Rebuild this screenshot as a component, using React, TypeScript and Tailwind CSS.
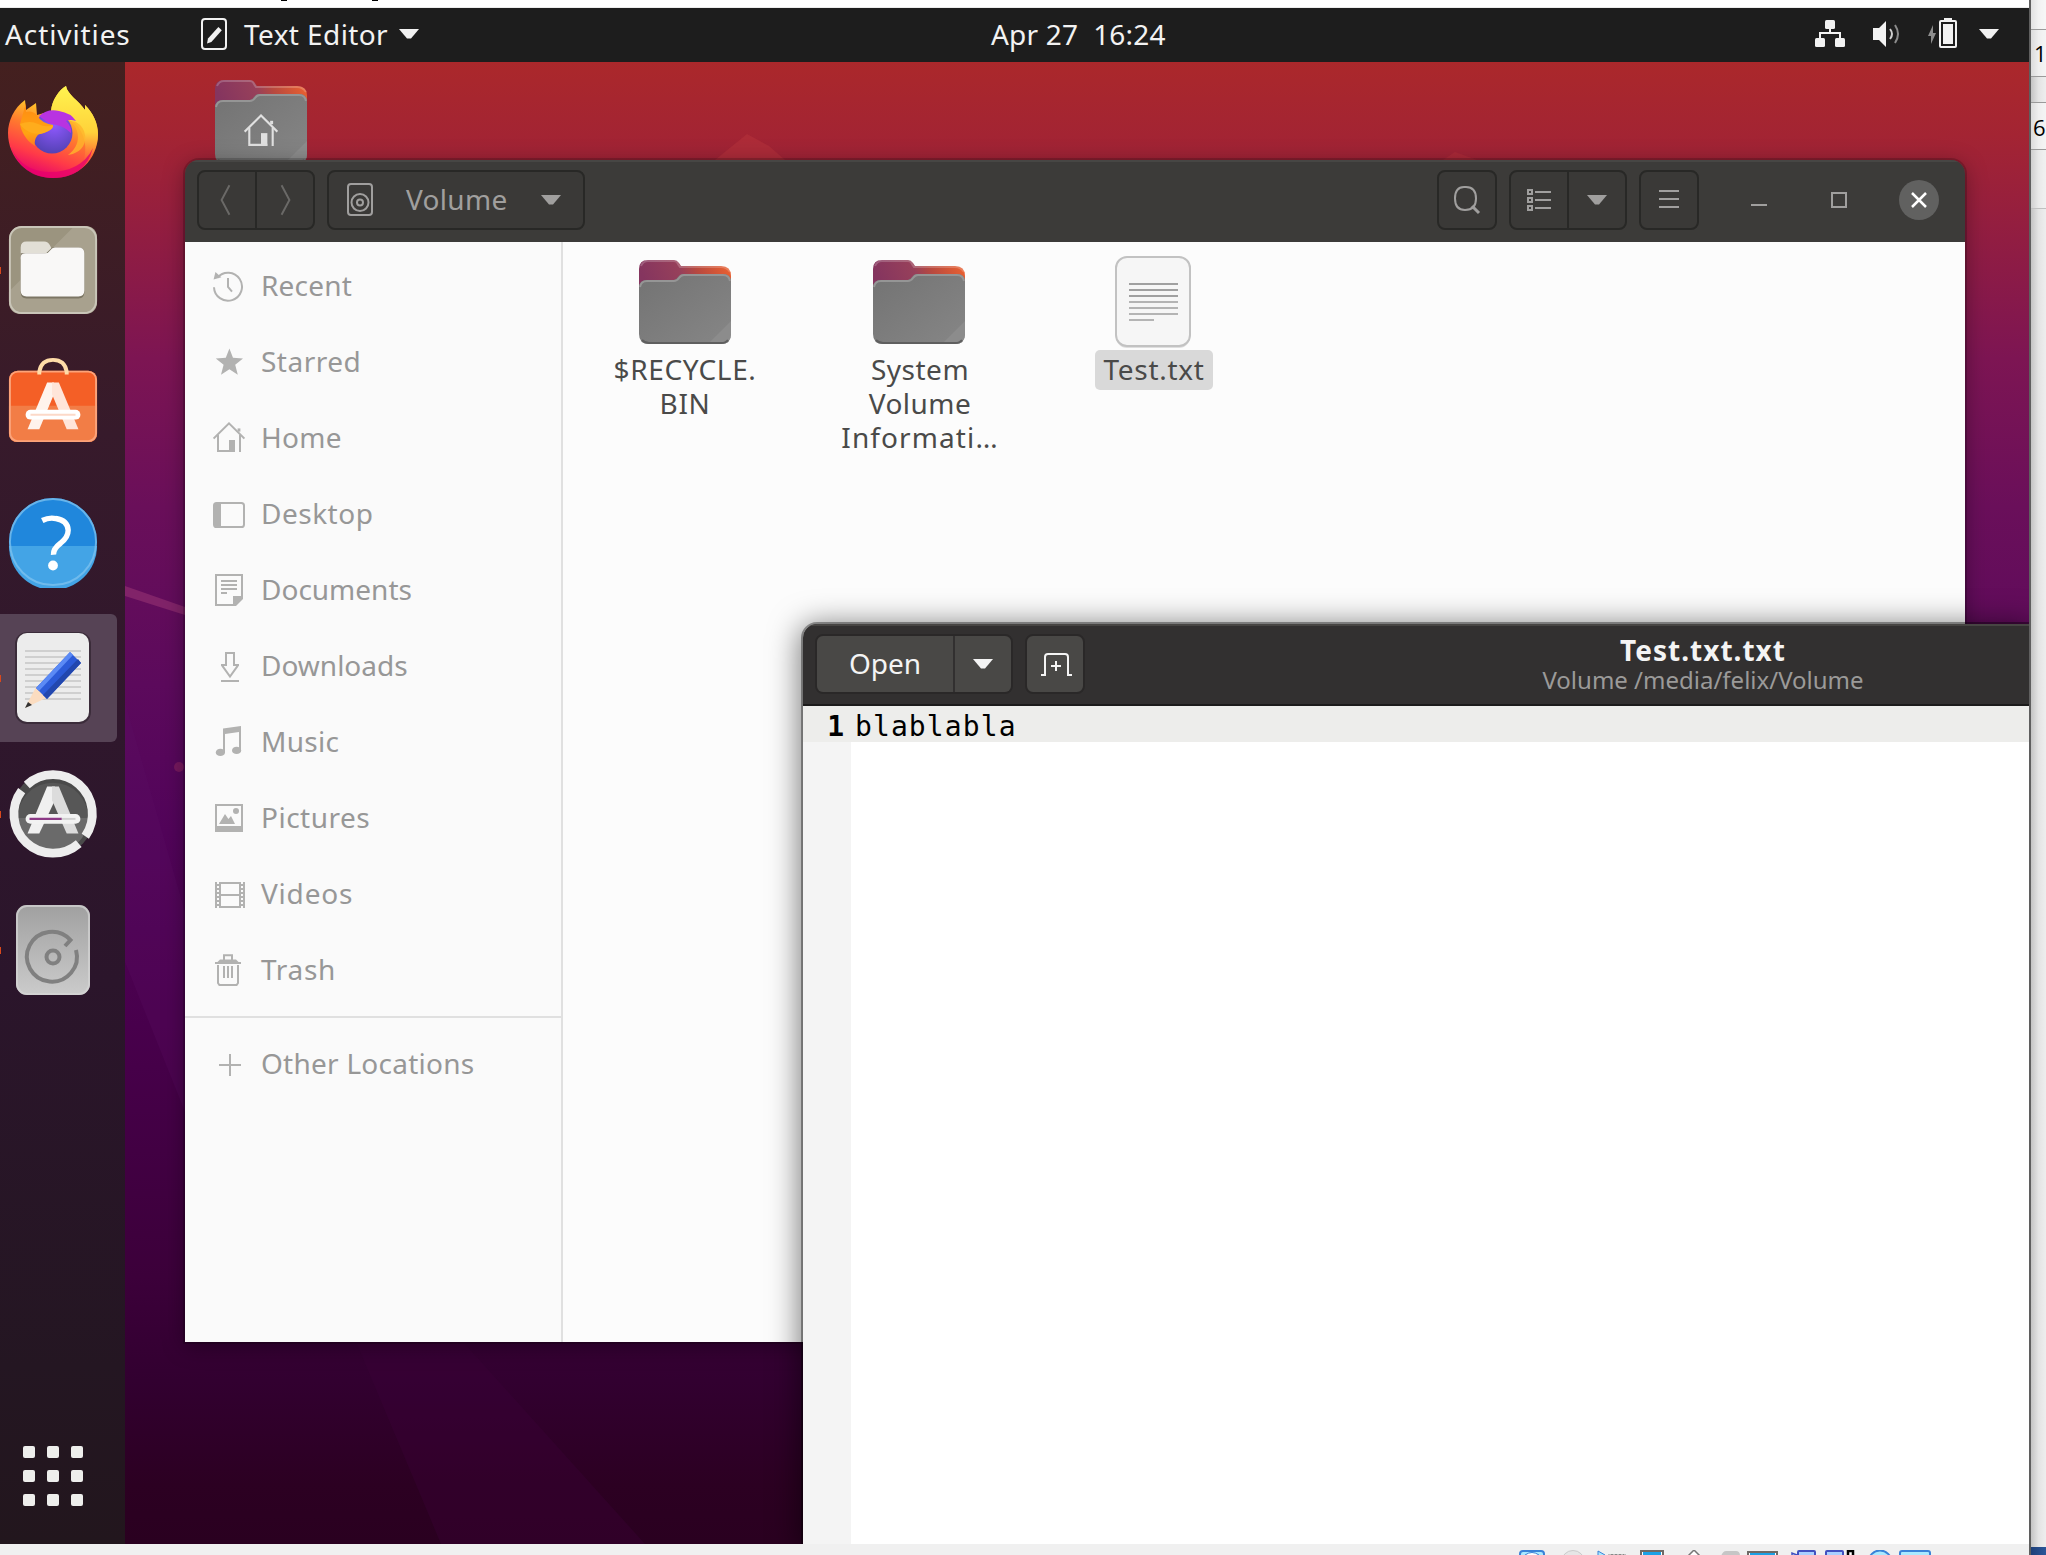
import React from "react";

const G = "#b2b2b1";

function Caret({ color }: { color: string }) {
  return (
    <svg className="h-[10px] w-[20px] shrink-0" viewBox="0 0 20 10">
      <path d="M0 0H20L12 9.5H8Z" fill={color} />
    </svg>
  );
}

function HomeGlyph({ color }: { color: string }) {
  return (
    <g stroke={color} fill="none" strokeWidth="1">
      <path d="M.3 8.3 8 .7l7.7 7.6" />
      <path d="M2.5 6.5v8H11M13.5 6.5V15" />
      <path d="M13 3.2v1.6" strokeWidth="1.4" />
      <rect x="8" y="9" width="3" height="6" fill={color} stroke="none" />
    </g>
  );
}

const places: { name: string; tracking: string; icon: React.ReactNode }[] = [
  {
    name: "Recent",
    tracking: "tracking-[0.2px]",
    icon: (
      <g fill="none" stroke={G}>
        <path d="M2.2 3.8A7 7 0 1 1 .5 8.6" />
        <path d="M7.5 4v4.4l2 2.4" />
        <path d="M.3 4.8 1.2 1l3 2.6Z" fill={G} stroke="none" />
      </g>
    ),
  },
  {
    name: "Starred",
    tracking: "tracking-[0.5px]",
    icon: <path fill={G} d="M8.2 1.2 10 5.9l5 .3-3.9 3.2 1.3 5L8.2 11.6 4 14.4l1.3-5L1.4 6.2l5-.3Z" />,
  },
  { name: "Home", tracking: "tracking-[0.3px]", icon: <HomeGlyph color={G} /> },
  {
    name: "Desktop",
    tracking: "tracking-[0.5px]",
    icon: (
      <g>
        <rect x=".5" y="2.5" width="15" height="12" rx="1.3" fill="none" stroke={G} />
        <path d="M1 2.5H4v12H1Z" fill={G} />
      </g>
    ),
  },
  {
    name: "Documents",
    tracking: "tracking-normal",
    icon: (
      <g fill="none" stroke={G}>
        <path d="M10.5 15.5h-9V.5h13V11.5" />
        <path d="M4 3.5h8M4 5.5h8M4 7.5h8M4 9.5h3" />
        <path d="M10 11h5v1.5L11.5 16H10Z" fill={G} stroke="none" />
      </g>
    ),
  },
  {
    name: "Downloads",
    tracking: "tracking-normal",
    icon: (
      <g fill="none" stroke={G}>
        <path d="M4 7.5H6.5v-6h4v6H13M4.6 7.8l3.9 5.5 3.9-5.5" />
        <path d="M4 15.5h9" />
      </g>
    ),
  },
  {
    name: "Music",
    tracking: "tracking-[0.3px]",
    icon: (
      <g fill={G}>
        <path d="M5 1.2 14 0v12.500h-1V3L6 4v9.500H5Z" />
        <ellipse cx="3.7" cy="13.2" rx="2.3" ry="1.8" />
        <ellipse cx="11.8" cy="12.2" rx="2.3" ry="1.8" />
      </g>
    ),
  },
  {
    name: "Pictures",
    tracking: "tracking-[0.5px]",
    icon: (
      <g>
        <rect x="1.5" y="1.5" width="13" height="13" fill="none" stroke={G} />
        <path d="M1 12h14v3H1ZM3 11l3-5 1.700 2.500L9 7l2 4Z" fill={G} />
        <circle cx="11.5" cy="4.5" r="1.5" fill={G} />
      </g>
    ),
  },
  {
    name: "Videos",
    tracking: "tracking-[0.8px]",
    icon: (
      <g fill="none" stroke={G}>
        <path d="M3.5 2.5h10v12h-10ZM3.5 8.5h10M1.5 2v13M15.5 2v13" />
        <path d="M2.5 3v12M14.5 3v12" strokeDasharray="1 1" />
      </g>
    ),
  },
  {
    name: "Trash",
    tracking: "tracking-[0.7px]",
    icon: (
      <g fill="none" stroke={G}>
        <path d="M1 4.5h13" />
        <path d="M2 4.2 3.5 2.8h8L13 4.2Z" fill={G} stroke="none" />
        <path d="M5.5 3V.6h4V3M2.5 5.5v9l.7 1h8.6l.7-1v-9" />
        <path d="M5.5 6v6M7.5 6v6M9.5 6v6" />
      </g>
    ),
  },
];

function PlaceRow({ name, icon, tracking }: { name: string; icon: React.ReactNode; tracking: string }) {
  return (
    <div className="flex h-[76px] items-center gap-4 pl-7">
      <svg className="h-8 w-8 shrink-0" viewBox="0 0 16 16">
        {icon}
      </svg>
      <span className={"-mt-[3px] " + tracking}>{name}</span>
    </div>
  );
}

function Folder({ id, children }: { id: string; children?: React.ReactNode }) {
  return (
    <svg className="h-[84px] w-[92px]" viewBox="0 0 92 84">
      <defs>
        <linearGradient id={id + "a"} x1="0" y1="0.2" x2="1" y2="0">
          <stop offset="0" stopColor="#85355f" />
          <stop offset=".42" stopColor="#97405a" />
          <stop offset=".6" stopColor="#b8493f" />
          <stop offset="1" stopColor="#f0642f" />
        </linearGradient>
        <linearGradient id={id + "b"} x1="0" y1="0" x2="1" y2="1">
          <stop offset="0" stopColor="#737373" />
          <stop offset="1" stopColor="#868686" />
        </linearGradient>
      </defs>
      <path d="M0 40V9Q0 0 9 0h26q3 0 5 3l2 3h40q10 0 10 10v24Z" fill={"url(#" + id + "a)"} />
      <path d="M2 6Q4 1 9 1h26q3 0 4 3l2 3h41q6 0 9 5" fill="none" stroke="#fff" strokeOpacity=".2" strokeWidth="2" />
      <path d="M0 28q0-8 8-8h27q2 0 4-3t5-3h40q8 0 8 8v52q0 10-10 10H10Q0 84 0 74Z" fill={"url(#" + id + "b)"} />
      <path d="M1 27q1-6 7-6h27q3 0 5-3t5-3h39q6 0 7 6" fill="none" stroke="#959595" strokeWidth="2" />
      <path d="M92 61v13q0 10-10 10H69Z" fill="#8c8c8c" />
      <path d="M3 80q3 3 7 3h72q5 0 7-3" fill="none" stroke="#5f5f5f" strokeWidth="2" />
      {children}
    </svg>
  );
}

function TextFile() {
  return (
    <svg className="h-[94px] w-[78px]" viewBox="0 0 78 94">
      <rect x="2" y="3" width="74" height="90" rx="11" fill="#dedede" />
      <rect x="2" y="2" width="74" height="89" rx="11" fill="#f6f6f6" stroke="#c2c2c2" strokeWidth="2" />
      <path d="M15 29h49M15 35h49M15 41h49" stroke="#a0a0a0" strokeWidth="2" />
      <path d="M15 47h49M15 53h49M15 59h49M15 65h25" stroke="#b4b4b4" strokeWidth="2" />
    </svg>
  );
}

function Firefox() {
  return (
    <svg className="-mt-1 h-[92px] w-[92px]" viewBox="0 0 92 92">
      <defs>
        <linearGradient id="ffBody" x1=".7" y1="0" x2=".35" y2="1">
          <stop offset="0" stopColor="#fff04a" />
          <stop offset=".3" stopColor="#ffc02a" />
          <stop offset=".52" stopColor="#ff7a2e" />
          <stop offset=".78" stopColor="#ff3a48" />
          <stop offset="1" stopColor="#e5006e" />
        </linearGradient>
        <linearGradient id="ffRight" x1=".5" y1="0" x2=".5" y2="1">
          <stop offset="0" stopColor="#fff44f" />
          <stop offset=".6" stopColor="#ffd23a" />
          <stop offset="1" stopColor="#ff8a3c" stopOpacity="0" />
        </linearGradient>
        <radialGradient id="ffGlobe" cx=".55" cy=".3" r=".75">
          <stop offset="0" stopColor="#9059ff" />
          <stop offset="1" stopColor="#5040b0" />
        </radialGradient>
        <linearGradient id="ffFox" x1="0" y1="0" x2="0" y2="1">
          <stop offset="0" stopColor="#ff8a12" />
          <stop offset=".7" stopColor="#ffa412" />
          <stop offset="1" stopColor="#ff7a22" />
        </linearGradient>
      </defs>
      <path d="M18 14 19 24l10-7 1 12 14-4C45 14 52 4 59 0c1 8 13 15 19 24v-5c8 8 13 18 13 29 0 26-20 44-45 44S1 72 1 47C1 35 7 22 18 14Z" fill="url(#ffBody)" />
      <path d="M59 0c1 8 13 15 19 24v-5c8 8 13 18 13 30 0 12-6 22-15 28 5-14 2-30-8-40L44 25C45 14 52 4 59 0Z" fill="url(#ffRight)" />
      <circle cx="45" cy="47" r="20.500" fill="url(#ffGlobe)" />
      <path d="M32 30q9-8 20-5 12 2 17 10-6-2-10 0 6 6 5 12-8-8-20-9-4-2-12-8Z" fill="#b833e1" />
      <path d="M63 35c10 8 12 24-2 34 14-2 20-12 16-24-3-7-8-10-14-10Z" fill="#ffb52c" opacity=".8" />
      <path d="M19 17v9q6-2 11 3 4 8 16 10c1 5-9 8-13 9s-6 7-5 12C18 54 14 44 13 38Z" fill="url(#ffFox)" />
      <path d="M13 38q10-4 18 0t15 1c1 5-9 8-13 9-7 0-16-3-20-10Z" fill="#ffac1c" />
      <path d="M4 61q10 24 38 25 32 0 44-24-8 30-40 30Q15 92 4 61Z" fill="#e5006e" opacity=".75" />
    </svg>
  );
}

function FilesApp() {
  return (
    <svg className="h-[92px] w-[92px]" viewBox="-1 -1 94 94">
      <rect x="1" y="1" width="90" height="90" rx="13" fill="#9b947f" />
      <path d="M91 14v64q0 13-13 13H14Q1 91 1 78V68L68 1h10q13 0 13 13Z" fill="#a8a18e" />
      <rect x="2" y="2" width="88" height="88" rx="12" fill="none" stroke="#c9c5b8" strokeWidth="2" />
      <path d="M13 35V23q0-6 6-6h18q4 0 6 4l2 4v12Z" fill="#e2dfd6" />
      <path d="M13 69V29h26l6-6h27q6 0 6 6v40q0 6-6 6H19q-6 0-6-6Z" fill="#7c7664" />
      <path d="M13 67V33q0-4 5-4h20q3 0 5-3t5-3h24q6 0 6 6v38q0 6-6 6H19q-6 0-6-6Z" fill="#f9f8f7" />
    </svg>
  );
}

function SoftwareApp() {
  return (
    <svg className="-mt-3 h-[92px] w-[92px]" viewBox="-1 -1 94 94">
      <rect x="1" y="16" width="90" height="73" rx="9" fill="#f45f26" />
      <path d="M1 52h90v28q0 9-9 9H10q-9 0-9-9Z" fill="#f27d46" />
      <rect x="2" y="17" width="88" height="71" rx="8" fill="none" stroke="#fba37a" strokeWidth="2" />
      <path d="M32 20v-3Q34 5 46 5t14 12v3" fill="none" stroke="#ffdca8" strokeWidth="4" />
      <path d="M20 76 40 28h7v12L32 76Z" fill="#fff3ec" />
      <path d="M72 76 52 28h-7v12l15 36Z" fill="#ffe5d9" />
      <rect x="18" y="56" width="56" height="10" rx="5" fill="#fff" />
      <path d="M23 61h46" stroke="#fcd9c8" strokeWidth="2" />
    </svg>
  );
}

function HelpApp() {
  return (
    <svg className="h-[92px] w-[92px]" viewBox="-1 -1 94 94">
      <circle cx="46" cy="46" r="45" fill="#2087dc" />
      <path d="M1 50h90A45 45 0 0 1 1 50Z" fill="#43a4e6" />
      <circle cx="46" cy="46" r="44" fill="none" stroke="#7fc3ef" strokeOpacity=".75" strokeWidth="2" />
      <path d="M35 24q7-3.500 14-2 12 2 12.500 12 0 7-7.500 13-8 6-7.500 12" fill="none" stroke="#fff" strokeWidth="5.500" />
      <circle cx="46" cy="70" r="5" fill="#fff" />
    </svg>
  );
}

function EditorApp() {
  return (
    <svg className="h-[92px] w-[92px]" viewBox="0 0 92 92">
      <rect x="8" y="0" width="76" height="92" rx="12" fill="#3b2c3a" />
      <rect x="10" y="1" width="72" height="89" rx="10" fill="#ececec" />
      <path d="M18 19h56M18 25h56M18 31h56M18 37h56M18 43h56M18 49h56M18 55h56M18 61h56M18 67h56" stroke="#cfcfcf" strokeWidth="2" />
      <path d="M18 76 29 55l10 11Z" fill="#fbdcc0" />
      <path d="M18 76l3-6 4 3Z" fill="#333" />
      <path d="M29 56 63 20l11 11-34 36Z" fill="#2c5bd8" />
      <path d="M29 56 63 20l3 3-34 36Z" fill="#5b8af5" />
      <path d="M36 63 71 27l3 4-34 36Z" fill="#2247ae" />
    </svg>
  );
}

function UpdaterApp() {
  return (
    <svg className="h-[92px] w-[92px]" viewBox="-1 -1 94 94">
      <circle cx="46" cy="46" r="43" fill="#4a4a4a" />
      <path d="M10 50h72a36 36 0 0 1-72 0Z" fill="#6a6a6a" />
      <path d="M10 50a36 36 0 0 1 72 0Z" fill="#575757" />
      <path d="M19.200 16.300A40 40 0 0 1 79 68.700M72.300 76.200A40 40 0 0 1 14 22.100" fill="none" stroke="#ededed" strokeWidth="9" />
      <path d="M20 66 40 18h8v14L32 66Z" fill="#f0f0f0" />
      <path d="M72 66 52 18h-7v14l15 34Z" fill="#dcdcdc" />
      <rect x="18" y="46" width="56" height="10" rx="5" fill="#f2f2f2" />
      <path d="M22 51h33" stroke="#8c3a86" strokeWidth="2.500" />
      <path d="M55 51h14" stroke="#d0d0d0" strokeWidth="2" />
    </svg>
  );
}

function DiskApp() {
  return (
    <svg className="h-[92px] w-[92px]" viewBox="0 0 92 92">
      <defs>
        <linearGradient id="disk" x1="0" y1="0" x2="0" y2="1">
          <stop offset="0" stopColor="#a0a0a0" />
          <stop offset="1" stopColor="#cbcbcb" />
        </linearGradient>
      </defs>
      <rect x="9" y="1" width="74" height="90" rx="11" fill="url(#disk)" />
      <rect x="10" y="2" width="72" height="88" rx="10" fill="none" stroke="#d6d6d6" strokeOpacity=".7" strokeWidth="2" />
      <path d="M69 46A25 25 0 1 1 63.500 36L58 42" fill="none" stroke="#808080" strokeWidth="4" />
      <circle cx="46" cy="53" r="6.500" fill="none" stroke="#808080" strokeWidth="4" />
    </svg>
  );
}

const dockItems: { icon: React.ReactNode; running?: boolean; active?: boolean }[] = [
  { icon: <Firefox /> },
  { icon: <FilesApp />, running: true },
  { icon: <SoftwareApp /> },
  { icon: <HelpApp /> },
  { icon: <EditorApp />, running: true, active: true },
  { icon: <UpdaterApp />, running: true },
  { icon: <DiskApp />, running: true },
];

function Dock() {
  return (
    <div className="flex w-[125px] shrink-0 flex-col justify-between bg-[linear-gradient(180deg,#44201f_0%,#371a2b_25%,#2f172c_45%,#2b152b_62%,#241622_88%,#22161d_100%)] pt-2">
      <div className="flex flex-col gap-2">
        {dockItems.map((d, i) => (
          <div
            key={i}
            className={
              d.active
                ? "relative flex h-32 w-[117px] items-center rounded-r-md bg-[#564355] pl-[7px]"
                : "relative flex h-32 w-[117px] items-center pl-[7px]"
            }
          >
            {d.running && <span className="absolute top-[61px] left-0 h-[7px] w-px bg-[#d9481c]" />}
            {d.icon}
          </div>
        ))}
      </div>
      <div className="mb-[38px] ml-[23px] grid w-[60px] grid-cols-3 gap-3">
        {Array.from({ length: 9 }, (_, i) => (
          <span key={i} className="h-3 w-3 rounded-[2px] bg-[#eeeeec]" />
        ))}
      </div>
    </div>
  );
}

function TopBar() {
  return (
    <div className="flex h-[54px] w-[2029px] shrink-0 items-center bg-[#1d1d1d] text-[28px] leading-none text-[#f2f2f2]">
      <span className="-mt-[2px] w-[198px] pl-[5px] tracking-[0.9px]">Activities</span>
      <svg className="-mt-[2px] h-8 w-8" viewBox="0 0 16 16">
        <rect x="2" y=".5" width="12" height="15" rx="1.5" fill="none" stroke="#f2f2f2" />
        <path d="M4.5 12.7 5 10.2 10.2 4.5l1.7 1.6-5.200 5.900Z" fill="#f2f2f2" />
      </svg>
      <span className="-mt-[2px] ml-[14px] w-[155px] tracking-[0.4px]">Text Editor</span>
      <span className="-mt-[3px] flex">
        <Caret color="#f2f2f2" />
      </span>
      <span className="-mt-[2px] ml-[572px] w-[180px] whitespace-pre tracking-[0.2px]">Apr 27  16:24</span>
      <div className="-mt-[2px] ml-auto flex items-center pr-[30px]">
        <svg className="h-8 w-8" viewBox="0 0 32 32" fill="#f2f2f2">
          <rect x="11" y="2" width="10" height="9" rx="1.5" />
          <rect x="1" y="20" width="10" height="9" rx="1.5" />
          <rect x="21" y="20" width="10" height="9" rx="1.5" />
          <path d="M16 10v6M6 21v-6h20v6" fill="none" stroke="#f2f2f2" strokeWidth="2" />
        </svg>
        <svg className="ml-[26px] h-8 w-8" viewBox="0 0 32 32">
          <path d="M1 10h6l7-7v26l-7-7H1Z" fill="#f2f2f2" />
          <path d="M18 11q4 5 0 10" fill="none" stroke="#d0d0d0" strokeWidth="2" />
          <path d="M23 7q6 9 0 18" fill="none" stroke="#8c8c8c" strokeWidth="2" />
        </svg>
        <svg className="ml-[22px] h-8 w-8" viewBox="0 0 32 32">
          <path d="M7 7 2 18h3v8l5-11H7Z" fill="#8f8f8f" />
          <rect x="14" y="3" width="16" height="26" rx="1" fill="none" stroke="#f2f2f2" strokeWidth="2" />
          <rect x="18" y="0" width="8" height="3" fill="#f2f2f2" />
          <rect x="17" y="6" width="10" height="20" fill="#f2f2f2" />
        </svg>
        <span className="ml-[21px] flex">
          <Caret color="#f2f2f2" />
        </span>
      </div>
    </div>
  );
}

function FilesWindow() {
  const btn = "flex h-[60px] items-center rounded-[8px] border-2 border-[#282826] bg-[#3a3937]";
  return (
    <div className="absolute top-[98px] left-[60px] flex h-[1182px] w-[1780px] flex-col overflow-hidden rounded-t-[14px] shadow-[0_0_0_2px_rgba(0,0,0,0.18),0_4px_22px_rgba(0,0,0,0.35)]">
      <div className="flex h-[82px] shrink-0 items-center border-t-2 border-[#474644] bg-[#3c3b39] pb-1 pl-3 text-[28px] text-[#a09f9e]">
        <div className={btn + " w-[118px]"}>
          <svg className="h-full w-[58px] border-r-2 border-[#282826]" viewBox="0 0 57 56">
            <path d="M31 13 23 28l8 15" fill="none" stroke="#6a6967" strokeWidth="2" />
          </svg>
          <svg className="h-full w-[56px]" viewBox="0 0 57 56">
            <path d="M25 13l8 15-8 15" fill="none" stroke="#6a6967" strokeWidth="2" />
          </svg>
        </div>
        <div className={btn + " ml-3 w-[258px] pl-[15px]"}>
          <svg className="h-9 w-8" viewBox="0 0 32 36">
            <rect x="4" y="2" width="24" height="31" rx="3" fill="none" stroke="#a09f9e" strokeWidth="2" />
            <circle cx="16" cy="20.500" r="8.500" fill="none" stroke="#a09f9e" strokeWidth="2" />
            <circle cx="16" cy="20.500" r="3" fill="none" stroke="#a09f9e" strokeWidth="2" />
          </svg>
          <span className="-mt-[2px] ml-[30px] w-[135px] leading-none tracking-[0.3px]">Volume</span>
          <Caret color="#a09f9e" />
        </div>
        <div className="ml-auto flex items-center">
          <div className={btn + " w-[60px] justify-center"}>
            <svg className="h-8 w-8" viewBox="0 0 32 32">
              <path d="M15 3h-2Q4 3 4 14.500T14 26q11 0 11-11.500T15 3Z" fill="none" stroke="#a09f9e" strokeWidth="2" />
              <path d="M21 22l7 7" stroke="#a09f9e" strokeWidth="3" />
            </svg>
          </div>
          <div className={btn + " ml-3 w-[118px]"}>
            <span className="flex h-full w-[58px] items-center justify-center border-r-2 border-[#282826]">
              <svg className="h-6 w-6" viewBox="0 0 24 24" fill="none" stroke="#a09f9e" strokeWidth="2">
                <path d="M8 4h16M8 12h16M8 20h16" />
                <path d="M1 2h4v4H1ZM1 10h4v4H1ZM1 18h4v4H1Z" />
              </svg>
            </span>
            <span className="flex w-[56px] justify-center">
              <Caret color="#a09f9e" />
            </span>
          </div>
          <div className={btn + " ml-3 w-[60px] justify-center"}>
            <svg className="h-5 w-5" viewBox="0 0 20 20">
              <path d="M0 1h20M0 9h20M0 17h20" stroke="#a09f9e" strokeWidth="2" />
            </svg>
          </div>
          <span className="mt-[10px] ml-[52px] h-[2px] w-4 bg-[#a09f9e]" />
          <span className="ml-16 h-4 w-4 border-2 border-[#a09f9e]" />
          <span className="mr-[26px] ml-[52px] flex h-10 w-10 items-center justify-center rounded-full bg-[#616160]">
            <svg className="h-4 w-4" viewBox="0 0 16 16">
              <path d="M1 1l14 14M15 1 1 15" stroke="#fff" strokeWidth="2.500" />
            </svg>
          </span>
        </div>
      </div>
      <div className="flex min-h-0 flex-1">
        <div className="w-[378px] shrink-0 border-r-2 border-[#e0e0e0] bg-[#fafafa] pt-[6px] text-[28px] leading-none text-[#979797]">
          {places.map((p) => (
            <PlaceRow key={p.name} name={p.name} icon={p.icon} tracking={p.tracking} />
          ))}
          <div className="mt-2 mb-2 h-[2px] bg-[#e0e0e0]" />
          <PlaceRow
            name="Other Locations"
            tracking="tracking-[0.25px]"
            icon={<path d="M8.500 3v11M3 8.500h11" stroke={G} fill="none" />}
          />
        </div>
        <div className="flex flex-1 bg-[#fcfcfc] pt-3 pl-[5px] text-center text-[28px] leading-[34px] text-[#4a4a49]">
          <div className="flex w-[234px] flex-col items-center">
            <div className="flex h-24 items-center">
              <Folder id="f1" />
            </div>
            <span className="pt-[2px] tracking-[0.6px]">
              $RECYCLE.
              <br />
              BIN
            </span>
          </div>
          <div className="flex w-[234px] flex-col items-center">
            <div className="flex h-24 items-center">
              <Folder id="f2" />
            </div>
            <span className="pt-[2px] pl-[2px] tracking-[0.5px]">
              System
              <br />
              Volume
              <br />
              <span className="tracking-[1.1px]">Informati…</span>
            </span>
          </div>
          <div className="flex w-[234px] flex-col items-center">
            <div className="flex h-24 items-center">
              <TextFile />
            </div>
            <span className="ml-[2px] h-10 w-[118px] rounded-[5px] bg-[#d9d9d9] pt-[2px] tracking-[0.7px]">Test.txt</span>
          </div>
        </div>
      </div>
    </div>
  );
}

function EditorWindow() {
  const btn = "flex items-center bg-[#494846]";
  return (
    <div className="absolute top-[562px] left-[678px] flex h-[920px] w-[1226px] flex-col overflow-hidden rounded-tl-[14px] bg-white shadow-[0_0_0_2px_rgba(0,0,0,0.35),0_4px_30px_4px_rgba(0,0,0,0.5)]">
      <div className="flex h-[82px] shrink-0 items-center border-t-2 border-b-2 border-t-[#474543] border-b-[#1c1b1b] bg-[#323030] pb-[2px] pl-3 text-[#f4f4f4]">
        <div className="flex h-[60px] w-[198px] overflow-hidden rounded-[8px] border-2 border-[#2a2828]">
          <span className={btn + " w-[136px] justify-center pb-[2px] text-[28px] leading-none"}>Open</span>
          <span className={btn + " ml-[2px] flex-1 justify-center"}>
            <Caret color="#f4f4f4" />
          </span>
        </div>
        <div className={btn + " ml-3 h-[60px] w-[60px] justify-center rounded-[8px] border-2 border-[#2a2828] pl-px"}>
          <svg className="h-8 w-8" viewBox="0 0 32 32" fill="none" stroke="#f4f4f4" strokeWidth="2">
            <path d="M1 27h4V9q0-3 3-3h17q3 0 3 3v18h4" />
            <path d="M16 13v10M11 18h10" />
          </svg>
        </div>
        <div className="ml-[458px] flex w-[320px] shrink-0 flex-col items-center whitespace-nowrap">
          <span className="text-[28px] leading-8 font-bold tracking-[1px]">Test.txt.txt</span>
          <span className="text-[24px] leading-7 text-[#9b9a99]">Volume /media/felix/Volume</span>
        </div>
      </div>
      <div className="flex h-9 shrink-0 items-center bg-[#ededeb] pt-[6px] font-['DejaVu_Sans_Mono',monospace] text-[28px] leading-none text-black">
        <span className="w-[41px] text-right font-bold">1</span>
        <span className="ml-[11px] tracking-[1.1px]">blablabla</span>
      </div>
      <div className="w-12 flex-1 bg-[#f4f4f4]" />
    </div>
  );
}

function Wallpaper() {
  return (
    <svg className="absolute inset-0 h-full w-full" viewBox="0 0 1904 1482" preserveAspectRatio="none">
      <path d="M590 98 622 72l22 12 16 14Z" fill="#b8333c" opacity=".5" />
      <path d="M1318 98 1330 90l22 8Z" fill="#b8333c" opacity=".4" />
      <path d="M0 524 60 545v8L0 534Z" fill="#a03a78" opacity=".5" />
      <circle cx="54" cy="705" r="5" fill="#8a2560" opacity=".6" />
      <path d="M232 1282H340L520 1482H316Z" fill="#3d0038" opacity=".35" />
      <path d="M0 640 60 850v200L0 900Z" fill="#5c1064" opacity=".25" />
    </svg>
  );
}

function HostStatusIcons() {
  return (
    <svg className="mt-[6px] ml-[1519px] h-[5px] w-[412px]" viewBox="0 0 412 5">
      <rect x="1" y="1" width="24" height="12" rx="3" fill="#a9e9ff" stroke="#3a82d8" strokeWidth="2" />
      <path d="M6 5q7-5 14 0" fill="#fff" stroke="#3a82d8" />
      <circle cx="54" cy="12" r="11.500" fill="#e6e6e6" stroke="#cacaca" />
      <path d="M79 8V1l7 4v3Z" fill="#a9e9ff" stroke="#3a82d8" />
      <rect x="89" y="4" width="18" height="6" fill="#bdbdbd" />
      <path d="M92 4.500h13" stroke="#888" strokeDasharray="2 2" />
      <rect x="122" y="1" width="22" height="12" fill="#fff" stroke="#6f6a66" strokeWidth="2" />
      <rect x="124" y="2" width="18" height="8" fill="#1ba1e6" />
      <path d="M169 6l6-6 6 6" fill="#fff" stroke="#777" strokeWidth="1.500" />
      <path d="M202 6q2-5 5-5h10q4 0 4 5Z" fill="#c6c6c6" />
      <rect x="229" y="2" width="29" height="12" fill="#fff" stroke="#6f6a66" strokeWidth="2" />
      <rect x="231" y="3" width="25" height="8" fill="#1ba1e6" />
      <rect x="279" y="1" width="17" height="12" rx="1" fill="#a9d0ff" stroke="#4150c0" strokeWidth="2" />
      <path d="M273 5V3l5 2" fill="#a9d0ff" stroke="#4150c0" strokeWidth="1.500" />
      <rect x="307" y="1" width="17" height="12" rx="1" fill="#a9d0ff" stroke="#4150c0" strokeWidth="2" />
      <rect x="329" y="1" width="5" height="12" fill="#fff" stroke="#000" strokeWidth="2.500" />
      <circle cx="361" cy="12" r="11.500" fill="#a9e9ff" stroke="#3a82d8" strokeWidth="2" />
      <rect x="381" y="1" width="30" height="12" rx="2" fill="#a9e9ff" stroke="#3a82d8" strokeWidth="2" />
    </svg>
  );
}

function HostEdge() {
  const line = "shrink-0 border-b border-[#9a9a9a]";
  return (
    <div className="flex w-[17px] shrink-0 flex-col border-l-2 border-[#5f5f5f] bg-[linear-gradient(90deg,#c4c4c4,#e4e4e4_50%,#eeeeee)] font-['Open_Sans',sans-serif] text-[22px] text-black">
      <div className={line + " h-[30px] bg-white/50"} />
      <div className={line + " flex h-[47px] items-center bg-white/40 pl-[3px] leading-none"}>1</div>
      <div className={line + " h-[26px]"} />
      <div className={line + " flex h-[47px] items-center bg-white/40 pt-px pl-[2px] leading-none"}>6</div>
      <div className="h-[59px] shrink-0 border-b border-[#c0c0c0] bg-white/20" />
      <div className="flex-1" />
      <div className="h-2 shrink-0 bg-[linear-gradient(90deg,#1e4079,#2a5699)]" />
    </div>
  );
}

export default function App() {
  return (
    <div className="flex h-[1555px] w-[2046px] overflow-hidden bg-[#f0f0f0] font-['Noto_Sans',sans-serif]">
      <div className="flex w-[2029px] shrink-0 flex-col">
        <div className="flex h-2 shrink-0 border-b border-[#ececec] bg-white">
          <span className="ml-[281px] h-px w-[6px] bg-black" />
          <span className="ml-[85px] h-px w-[6px] bg-black" />
        </div>
        <TopBar />
        <div className="flex h-[1482px] shrink-0">
          <Dock />
          <div className="relative flex-1 overflow-hidden bg-[linear-gradient(180deg,#ab282b_0%,#a32433_5%,#911d42_12%,#7d1553_20%,#6a0f5a_30%,#5c0a5c_42%,#52045a_52%,#48004c_65%,#3c003a_82%,#320030_89%,#2c0022_96%,#2a0020_100%)]">
            <Wallpaper />
            <div className="absolute top-[18px] left-[90px]">
              <Folder id="home">
                <svg x="29" y="34" width="34" height="34" viewBox="0 0 16 16">
                  <HomeGlyph color="#e0e0e0" />
                </svg>
              </Folder>
            </div>
            <FilesWindow />
            <EditorWindow />
          </div>
        </div>
        <div className="h-[11px] shrink-0 overflow-hidden bg-[#f0f0f0]">
          <HostStatusIcons />
        </div>
      </div>
      <HostEdge />
    </div>
  );
}
